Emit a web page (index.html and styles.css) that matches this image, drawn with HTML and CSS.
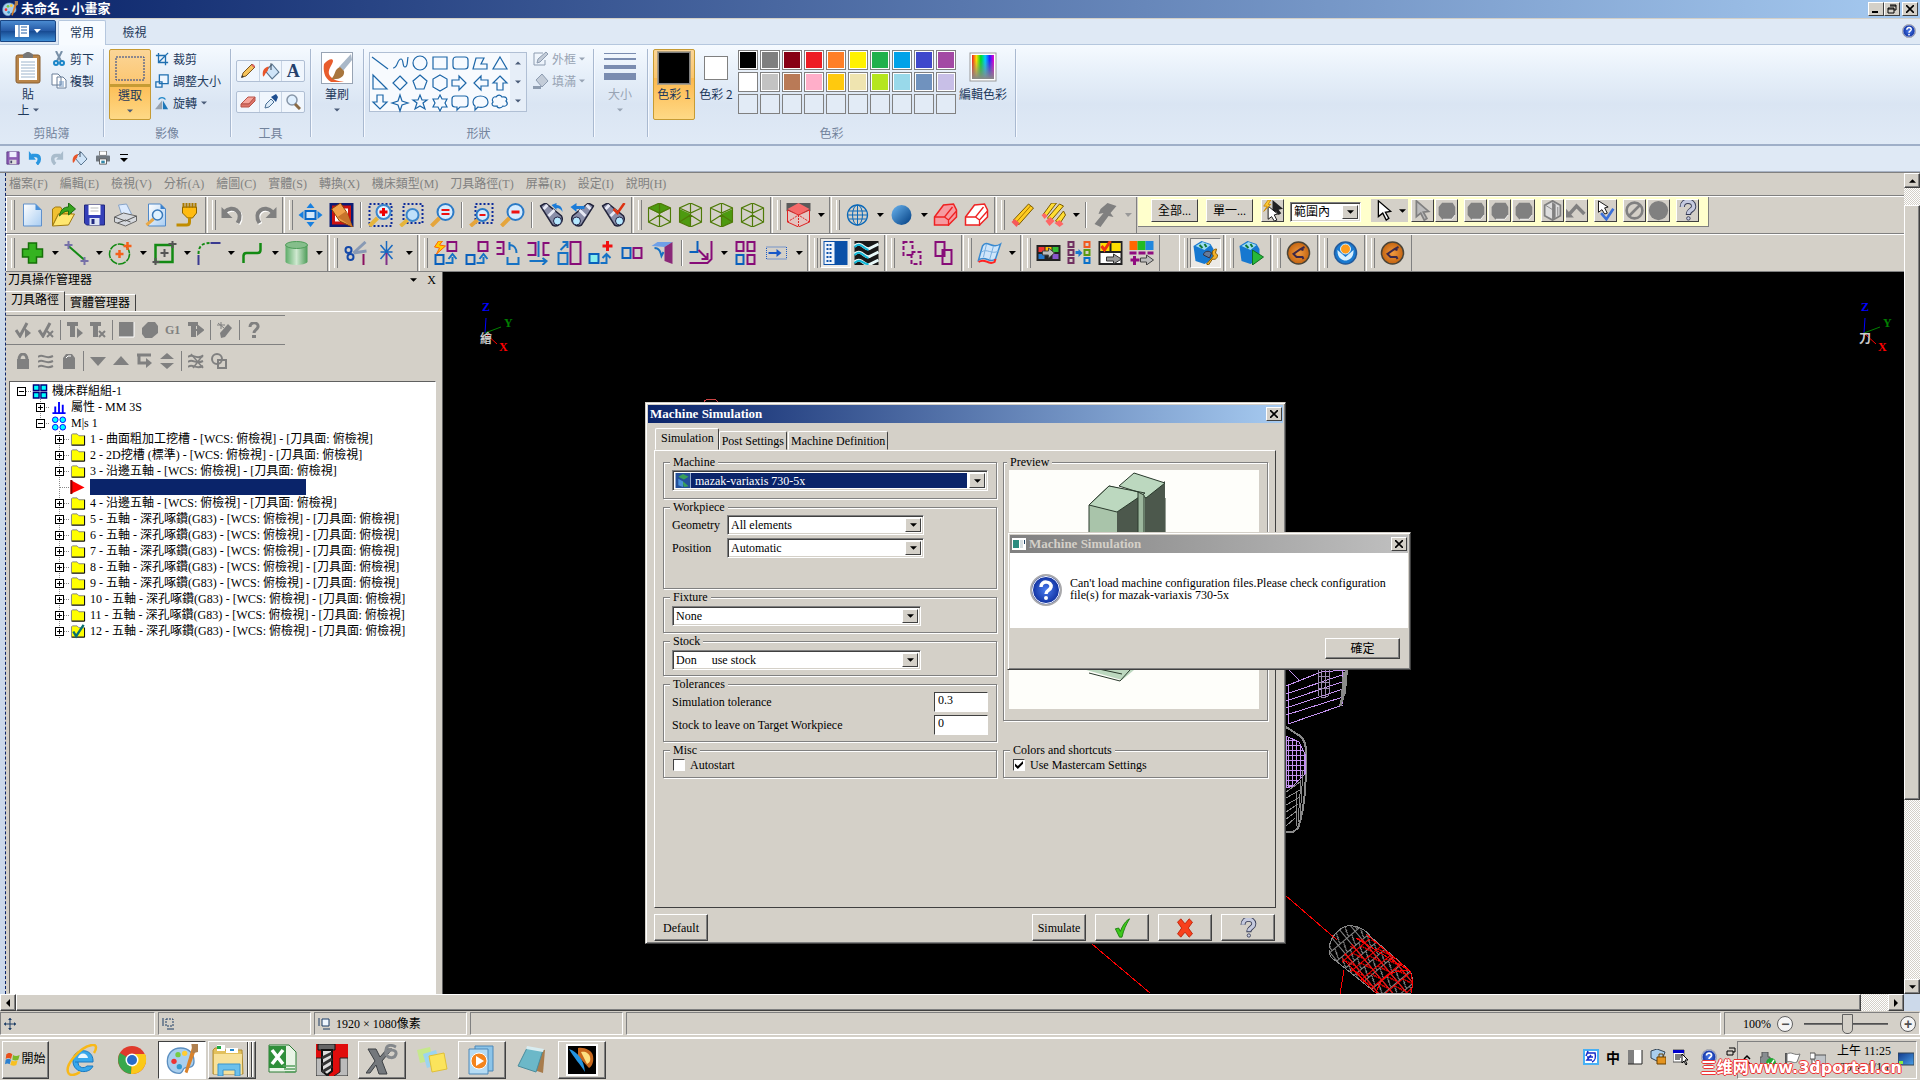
FILE: index.html
```html
<!DOCTYPE html>
<html lang="zh-Hant">
<head>
<meta charset="utf-8">
<title>未命名 - 小畫家</title>
<link rel="stylesheet" href="styles.css">
</head>
<body>
<svg class="defs" aria-hidden="true">
<defs>
<linearGradient id="gBall" x1="0" y1="0" x2="1" y2="1"><stop offset="0" stop-color="#6bb5f0"/><stop offset="1" stop-color="#003c80"/></linearGradient>
<linearGradient id="gCyl"><stop offset="0" stop-color="#5cac68"/><stop offset=".5" stop-color="#cfe8d0"/><stop offset="1" stop-color="#4d9c58"/></linearGradient>
<linearGradient id="gPage" x1="0" y1="0" x2="1" y2="1"><stop offset="0" stop-color="#fff"/><stop offset="1" stop-color="#a9cdf2"/></linearGradient>
<linearGradient id="gRain"><stop offset="0" stop-color="#e22"/><stop offset=".2" stop-color="#fd0"/><stop offset=".4" stop-color="#0d2"/><stop offset=".6" stop-color="#0cf"/><stop offset=".8" stop-color="#22f"/><stop offset="1" stop-color="#e0c"/></linearGradient>
<linearGradient id="gDark" x1="0" y1="0" x2="0" y2="1"><stop offset=".2" stop-color="#888" stop-opacity="0"/><stop offset="1" stop-color="#888"/></linearGradient>
<linearGradient id="gDesk" x1="0" y1="0" x2="1" y2="1"><stop offset="0" stop-color="#123a8c"/><stop offset="1" stop-color="#4aa0e8"/></linearGradient>
<radialGradient id="gHelp"><stop offset="0" stop-color="#4a7cf0"/><stop offset="1" stop-color="#0a2a98"/></radialGradient>
<radialGradient id="gOr"><stop offset="0" stop-color="#f09a40"/><stop offset="1" stop-color="#c46410"/></radialGradient>
</defs>
<symbol id="palette" viewBox="0 0 24 24"><path d="M11 3C5 3 1 7 1 13s4 9 9 9c3 0 2-3 4-4s7 1 7-5S17 3 11 3z" fill="#a9cfee" stroke="#5b8ec0"/><circle cx="6" cy="13" r="2" fill="#e33"/><circle cx="9" cy="8" r="2" fill="#7c4"/><circle cx="14" cy="7" r="2" fill="#fc3"/><circle cx="10" cy="17" r="2" fill="#39c"/><path d="M20 1l3 2-7 19-2-1z" fill="#d9822b"/><path d="M19 0h5v6l-4 1z" fill="#b0804e"/></symbol>
<symbol id="paste" viewBox="0 0 26 32"><rect x="1" y="3" width="24" height="28" rx="2" fill="#b98549" stroke="#8a5f30"/><rect x="4" y="6" width="18" height="22" fill="#fff"/><path d="M6 10h14M6 13h14M6 16h14M6 19h14M6 22h14M6 25h14" stroke="#9db4cc"/><path d="M8 3c0-1 3-3 5-3s5 2 5 3v3H8z" fill="#777"/></symbol>
<symbol id="cut" viewBox="0 0 16 16"><path d="M5 0l5 10M11 0L6 10" stroke="#7890a8" stroke-width="2" fill="none"/><circle cx="5" cy="12" r="2" fill="none" stroke="#1b86c8" stroke-width="2"/><circle cx="11" cy="12" r="2" fill="none" stroke="#1b86c8" stroke-width="2"/></symbol>
<symbol id="copy" viewBox="0 0 16 16"><path d="M1 1h6l3 3v8H1zM6 4h6l3 3v8H6z" fill="#fff" stroke="#6a7f98"/><path d="M8 9h5M8 11h5M8 13h5" stroke="#6d93c0"/></symbol>
<symbol id="crop" viewBox="0 0 16 16"><path d="M4 1v11h11M1 4h11v11M4 12L15 1" fill="none" stroke="#1f6fb0" stroke-width="1.5"/></symbol>
<symbol id="resize" viewBox="0 0 16 16"><path d="M5 1h10v10H5zM1 9h7v6H1z" fill="#eef6ff" stroke="#1f6fb0" stroke-width="1.5"/></symbol>
<symbol id="rotate" viewBox="0 0 16 16"><path d="M8 5v10H0z" fill="#98a2ae"/><path d="M9 5v10h6z" fill="#1d76b8"/><path d="M4 4c2-3 6-3 8 0" fill="none" stroke="#1d86c8" stroke-width="1.5"/></symbol>
<symbol id="pencil" viewBox="0 0 16 16"><path d="M2 14l1-4L12 1l3 3-9 9z" fill="#f6c45c" stroke="#7a5520"/><path d="M11 2l3 3 1-2-2-2z" fill="#d66"/><path d="M1 15l1-3 2 2z" fill="#333"/></symbol>
<symbol id="bucket" viewBox="0 0 16 16"><path d="M3 8l6-6 6 7-6 6z" fill="#cfe4f8" stroke="#5a7690"/><path d="M8 1v6" stroke="#456"/><path d="M6 4C1 5 0 9 1 13c2-1 2-4 4-5z" fill="#e8552a"/></symbol>
<symbol id="eraser" viewBox="0 0 16 16"><path d="M1 10l7-7h7l-6 7z" fill="#f6a59b" stroke="#b8544a"/><path d="M1 10h8l6-7v4l-6 6H1z" fill="#dd7468" stroke="#b8544a"/></symbol>
<symbol id="dropper" viewBox="0 0 16 16"><path d="M2 14l1-4 5-5 3 3-5 5z" fill="#dcebf8" stroke="#4a6f94"/><path d="M8 3l5 5 2-5-2-3z" fill="#1d4e90"/></symbol>
<symbol id="mag" viewBox="0 0 16 16"><circle cx="7" cy="6" r="5" fill="#e0f0ff" stroke="#8796a8" stroke-width="1.5"/><path d="M10 10l5 5" stroke="#8a6a45" stroke-width="3"/></symbol>
<symbol id="brush" viewBox="0 0 32 32"><rect x=".5" y=".5" width="31" height="31" fill="#fff" stroke="#98a4b4"/><path d="M3 12c4-5 9-6 9-3s-7 10-3 15c3 4 8 5 14 6H10C3 26 2 18 3 12z" fill="#e85c2c"/><path d="M30 2L18 15l4 4L31 8z" fill="#a9b8c8"/><path d="M19 15c-6 2-4 8-9 12 8 1 14-2 13-8z" fill="#a8763e"/></symbol>
<symbol id="outline" viewBox="0 0 16 16"><path d="M1 2h9M1 2v12h11V9" fill="none" stroke="#8d9cb0"/><path d="M4 12l1-4 8-7 2 2-8 8z" fill="#c3ccd8" stroke="#8d9cb0"/></symbol>
<symbol id="fillg" viewBox="0 0 16 16"><path d="M3 7l6-6 6 7-6 6z" fill="#c3ccd8" stroke="#8d9cb0"/><path d="M0 13h8v3H0z" fill="#8d9cb0"/></symbol>
<symbol id="rainbow" viewBox="0 0 28 32"><rect x="1" y="1" width="26" height="28" fill="#fff" stroke="#999"/><rect x="3" y="3" width="22" height="24" fill="url(#gRain)"/><rect x="3" y="3" width="22" height="24" fill="url(#gDark)"/></symbol>
<symbol id="floppy" viewBox="0 0 24 24"><path d="M2 2h20v20H4l-2-2z" fill="#3540b8" stroke="#22287c"/><path d="M6 2h12v10H6z" fill="#fff"/><path d="M8 5h8M8 8h8" stroke="#bbb"/><path d="M7 15h10v7H7z" fill="#dde4f4"/><path d="M9 16h3v5H9z" fill="#222a80"/></symbol>
<symbol id="qsave" viewBox="0 0 16 16"><path d="M1 1h14v14H1z" fill="#8c5cb4" stroke="#5c3c84"/><path d="M4 1h8v6H4z" fill="#eef"/><path d="M4 10h8v5H4z" fill="#ddd"/><path d="M5 11h2v3H5z" fill="#446"/></symbol>
<symbol id="qundo" viewBox="0 0 16 16"><path d="M4 5h5c5 0 5 7 1 10" fill="none" stroke="#2a96e0" stroke-width="4"/><path d="M1 0v10h8z" fill="#2a96e0"/></symbol>
<symbol id="qredo" viewBox="0 0 16 16"><path d="M12 5H7c-5 0-5 7-1 10" fill="none" stroke="#a9bccc" stroke-width="4"/><path d="M15 0v10H7z" fill="#a9bccc"/></symbol>
<symbol id="qprint" viewBox="0 0 16 16"><path d="M4 0h8v5H4z" fill="#fff" stroke="#777"/><rect x="0" y="5" width="16" height="7" rx="1" fill="#707880"/><path d="M4 9h8v6H4z" fill="#fff" stroke="#555"/><path d="M6 11h4v3H6z" fill="#38a"/></symbol>
<symbol id="new" viewBox="0 0 24 24"><path d="M3 1h12l6 6v16H3z" fill="url(#gPage)" stroke="#5f90cc"/><path d="M15 1v6h6z" fill="#4a90d8"/></symbol>
<symbol id="open" viewBox="0 0 24 24"><path d="M1 23V6l3-2h5l2 3h9v4H7z" fill="#f0c030" stroke="#a07a10"/><path d="M1 23L7 11h16l-6 11z" fill="#ffe770" stroke="#a07a10"/><path d="M8 13c1-7 5-9 9-9V0l7 6-7 6V8c-4 0-6 2-9 5z" fill="#37a41e" stroke="#1c6c10"/></symbol>
<symbol id="print" viewBox="0 0 24 24"><path d="M5 2l8-1 5 10-9 3z" fill="#dbeaff" stroke="#88a4c8"/><path d="M1 14l9-4 13 3v5l-11 5L1 19z" fill="#d6d9de" stroke="#666"/><path d="M1 14l11 4 11-5M4 20l8-3 5 2" fill="none" stroke="#555"/></symbol>
<symbol id="preview" viewBox="0 0 24 24"><path d="M4 1h12l5 5v17H4z" fill="url(#gPage)" stroke="#4f88c8"/><path d="M16 1v5h5z" fill="#3a80cc"/><circle cx="13" cy="12" r="5" fill="#dff1ff" stroke="#3a78b8" stroke-width="1.5"/><path d="M9 16l-7 6" stroke="#e8a848" stroke-width="3"/></symbol>
<symbol id="plug" viewBox="0 0 24 24"><path d="M7 4h14v6l-4 5h-5L7 10z" fill="#fb1" stroke="#8a6400"/><path d="M8 0v5M11 0v5M14 0v5M17 0v5M20 0v5" stroke="#a87800" stroke-width="2"/><path d="M14 14v5q0 3-3 3H1" fill="none" stroke="#c08c00" stroke-width="3"/></symbol>
<symbol id="undo" viewBox="0 0 24 24"><path d="M4 10c8-8 20 0 13 11" fill="none" stroke="#fff" stroke-width="4"/><path d="M3 9c8-8 20 0 13 11" fill="none" stroke="#808080" stroke-width="4"/><path d="M0 4v11h11z" fill="#808080"/></symbol>
<symbol id="redo" viewBox="0 0 24 24"><path d="M21 10C13 2 1 10 8 21" fill="none" stroke="#fff" stroke-width="4"/><path d="M20 9C12 1 0 9 7 20" fill="none" stroke="#808080" stroke-width="4"/><path d="M24 4v11H13z" fill="#808080"/></symbol>
<symbol id="fit" viewBox="0 0 24 24"><path d="M7 8h10v8H7z" fill="#d4e8fa" stroke="#0868c8" stroke-width="2"/><path d="M12 0l4 5H8zM12 24l4-5H8zM0 12l5-4v8zM24 12l-5-4v8z" fill="#1880e0"/></symbol>
<symbol id="repaint" viewBox="0 0 24 24"><path d="M0 0h24v24H0z" fill="#0c1c74"/><path d="M4 4h16v16H4z" fill="#fff" stroke="#c11" stroke-width="3"/><path d="M2 6l9-6 6 9 6 15-13-6z" fill="#f0a04a" stroke="#8a4208"/><path d="M8 14l9-6 6 16z" fill="#c8742c"/></symbol>
<symbol id="zwin" viewBox="0 0 24 24"><path d="M1 1h22v22H1z" fill="none" stroke="#0b2a9a" stroke-width="2" stroke-dasharray="2 2"/><circle cx="15" cy="9" r="7" fill="#e2f2ff" stroke="#3b86cc" stroke-width="2"/><path d="M9 15l-8 8" stroke="#e5b53c" stroke-width="4"/><path d="M11 9h8M15 5v8" stroke="#e00" stroke-width="3"/></symbol>
<symbol id="ztgt" viewBox="0 0 24 24"><path d="M4 1h19v19H4z" fill="none" stroke="#0b2a9a" stroke-width="2" stroke-dasharray="2 2"/><circle cx="13" cy="12" r="6" fill="#bfe0fa" stroke="#3b86cc" stroke-width="2"/><path d="M8 17l-7 6" stroke="#e5b53c" stroke-width="4"/></symbol>
<symbol id="zeq" viewBox="0 0 24 24"><circle cx="15" cy="9" r="8" fill="#d6ecff" stroke="#2b7ac6" stroke-width="2"/><path d="M9 15l-8 8" stroke="#e5a53c" stroke-width="4"/><path d="M11 7h8M11 11h8" stroke="#e11" stroke-width="2"/></symbol>
<symbol id="zm2" viewBox="0 0 24 24"><path d="M6 1h17v19H6z" fill="none" stroke="#0b2a9a" stroke-width="2" stroke-dasharray="2 2"/><circle cx="13" cy="12" r="6" fill="#d6ecff" stroke="#2b7ac6" stroke-width="2"/><path d="M8 17l-7 6" stroke="#e5a53c" stroke-width="4"/><path d="M10 12h6" stroke="#e11" stroke-width="2"/></symbol>
<symbol id="zm" viewBox="0 0 24 24"><circle cx="15" cy="9" r="8" fill="#d6ecff" stroke="#2b7ac6" stroke-width="2"/><path d="M9 15l-8 8" stroke="#e5a53c" stroke-width="4"/><path d="M11 9h8" stroke="#e11" stroke-width="3"/></symbol>
<symbol id="bino" viewBox="0 0 24 24"><path d="M1 3l5-3 16 13c3 6-4 12-9 9z" fill="#8a8ea8" stroke="#22243c" stroke-width="1.5"/><path d="M4 6l4-4M9 13l6-6" stroke="#e6e8f4" stroke-width="3"/><circle cx="18" cy="18" r="4" fill="#b6e8ff" stroke="#224"/></symbol>
<symbol id="bino1" viewBox="0 0 24 24"><use href="#bino"/><path d="M12 2l5-2v2c5 0 6 4 6 7-2-3-3-4-6-4v2z" fill="#1c7cd8"/></symbol>
<symbol id="bino2" viewBox="0 0 24 24"><g transform="translate(24 0) scale(-1 1)"><use href="#bino"/></g><path d="M0 4l6-4v3h8v3H6v3z" fill="#1c7cd8"/></symbol>
<symbol id="bino3" viewBox="0 0 24 24"><use href="#bino"/><path d="M12 6l4 4 7-10" fill="none" stroke="#d31" stroke-width="2.5"/></symbol>
<symbol id="cube" viewBox="0 0 24 24"><path d="M12 0l11 5v14l-11 5-11-5V5zM12 10v14M1 5l11 5 11-5M12 0v10M1 19l11-7 11 7" fill="none" stroke="#4e7a08" stroke-width="1.2"/></symbol>
<symbol id="cubeT" viewBox="0 0 24 24"><path d="M12 0l11 5-11 6L1 5z" fill="#4d9a10"/><use href="#cube"/></symbol>
<symbol id="cubeL" viewBox="0 0 24 24"><path d="M1 6l11 5v13L1 19z" fill="#4d9a10"/><use href="#cube"/></symbol>
<symbol id="cubeR" viewBox="0 0 24 24"><path d="M23 6l-11 5v13l11-5z" fill="#4d9a10"/><use href="#cube"/></symbol>
<symbol id="cubeRed" viewBox="0 0 24 24"><path d="M0 0h24v8l-3 2H3L0 8z" fill="#5a5a5a"/><path d="M12 0l11 6-11 6L1 6z" fill="#f66a6a"/><path d="M1 7l11 5 11-5v12l-11 5-11-5z" fill="#e4c4c0" stroke="#d22"/><path d="M12 12v12M1 19l11-7 11 7" stroke="#d22" fill="none" stroke-dasharray="2 1"/></symbol>
<symbol id="globe" viewBox="0 0 24 24"><circle cx="12" cy="12" r="10" fill="none" stroke="#0a68b8" stroke-width="1.3"/><path d="M2 12h20M3 8h18M3 16h18M12 2v20" stroke="#0a68b8" fill="none"/><ellipse cx="12" cy="12" rx="5" ry="10" fill="none" stroke="#0a68b8"/></symbol>
<symbol id="ball" viewBox="0 0 24 24"><circle cx="12" cy="12" r="10" fill="url(#gBall)"/></symbol>
<symbol id="block" viewBox="0 0 24 24"><path d="M1 14l9-12 10-1 3 6v7l-8 8H1z" fill="#f69aa0" stroke="#e22" stroke-width="1.5"/><path d="M1 14h10l4 3v6M11 14l8-10M15 17l8-9" stroke="#e22" fill="none" stroke-width="1.3"/></symbol>
<symbol id="blockW" viewBox="0 0 24 24"><path d="M1 14l9-12 10-1 3 6v7l-8 8H1z" fill="#fff" stroke="#e22" stroke-width="1.5"/><path d="M1 14h10l4 3v6M11 14l8-10M15 17l8-9" stroke="#e22" fill="none" stroke-width="1.3"/></symbol>
<symbol id="pen" viewBox="0 0 24 24"><path d="M3 17L18 1l5 4L8 22z" fill="#fc2" stroke="#7a5a00"/><path d="M6 19L20 3" stroke="#a87800"/><path d="M1 19l3-3 5 4-3 4z" fill="#f55a5a"/></symbol>
<symbol id="pens" viewBox="0 0 24 24"><path d="M2 11L10 0h5L5 13zM6 15L18 1l4 2L9 18zM14 18l8-10 2 4-6 9z" fill="#fd3" stroke="#7a5a00"/><path d="M0 12l3-2 3 3-3 3zM4 18l5-4 4 4-5 5zM13 20l5-3 4 4-4 3z" fill="#f66"/></symbol>
<symbol id="tool" viewBox="0 0 24 24"><path d="M14 0l9 3-6 7 3 4-5-1-8 11-6-3 9-11-5 1 2-5z" fill="#808080"/></symbol>
<symbol id="plus" viewBox="0 0 24 24"><path d="M8 2h8v6h6v8h-6v6H8v-6H2V8h6z" fill="#35b320" stroke="#167008" stroke-width="1.5"/></symbol>
<symbol id="line" viewBox="0 0 24 24"><path d="M4 5l16 14" stroke="#138a13" stroke-width="2"/><path d="M0 4h8M4 0v8M16 20h8M20 16v8" stroke="#7670a8" stroke-width="2"/></symbol>
<symbol id="circ" viewBox="0 0 24 24"><circle cx="11" cy="13" r="10" fill="none" stroke="#138a13" stroke-width="1.5" stroke-dasharray="8 1"/><path d="M7 13h8M11 9v8M15 5h8M19 1v8" stroke="#f4611a" stroke-width="2.5"/></symbol>
<symbol id="rect" viewBox="0 0 24 24"><path d="M3 4h17v17H3z" fill="none" stroke="#138a13" stroke-width="2.5"/><path d="M8 12h8M12 8v8M16 3h8M20 0v7M0 21h7M3 17v7" stroke="#555" stroke-width="2"/></symbol>
<symbol id="fillet" viewBox="0 0 24 24"><path d="M2 13C2 5 6 2 13 2" fill="none" stroke="#138a13" stroke-width="2" stroke-dasharray="3 2"/><path d="M14 2h10M2 14v10" stroke="#3a3a90" stroke-width="2"/></symbol>
<symbol id="spline" viewBox="0 0 24 24"><path d="M3 22v-7q0-3 3-3h11q3 0 3-3V2" fill="none" stroke="#138a13" stroke-width="2.5"/></symbol>
<symbol id="cyl" viewBox="0 0 24 24"><path d="M1 4v17c3 4 19 4 22 0V4z" fill="url(#gCyl)"/><ellipse cx="12" cy="4" rx="11" ry="3.500" fill="#85be8b" stroke="#4d9c58"/></symbol>
<symbol id="trim" viewBox="0 0 24 24"><path d="M10 12L22 1M10 12l13-2" stroke="#8899b4" stroke-width="3"/><circle cx="5" cy="9" r="3" fill="none" stroke="#1448a8" stroke-width="2"/><circle cx="7" cy="16" r="3" fill="none" stroke="#1448a8" stroke-width="2"/><path d="M20 13v11" stroke="#8a1060" stroke-width="2"/></symbol>
<symbol id="brk" viewBox="0 0 24 24"><path d="M12 0v10M6 4l12 14M18 4L6 18M6 11h12" stroke="#1868c0" stroke-width="1.500"/><path d="M12 12v12" stroke="#803088" stroke-width="2"/></symbol>
<symbol id="x1" viewBox="0 0 24 24"><path d="M14 1h9v9h-9z" fill="none" stroke="#870c78" stroke-width="2"/><path d="M2 14h8v9H2z" fill="none" stroke="#0a60bc" stroke-width="2"/><path d="M12 22h7v-6M15 18l4-5 4 5" fill="none" stroke="#1672c4" stroke-width="2"/></symbol>
<symbol id="x0" viewBox="0 0 24 24"><use href="#x1"/><path d="M5 0L1 6l5 1-3 6 9-8-6-1 3-4z" fill="#fc0" stroke="#f60"/></symbol>
<symbol id="x2" viewBox="0 0 24 24"><path d="M1 1h7v12H1M1 7h5" fill="none" stroke="#870c78" stroke-width="2"/><path d="M12 16v7h11v-7M14 4c5 0 7 4 7 8M14 1v8" fill="none" stroke="#1672c4" stroke-width="2"/></symbol>
<symbol id="x3" viewBox="0 0 24 24"><path d="M1 2h8v12H1M23 2h-6v12h6" fill="none" stroke="#870c78" stroke-width="2"/><path d="M12 0v16M3 20h16M16 17l4 3-4 4" fill="none" stroke="#1672c4" stroke-width="2"/></symbol>
<symbol id="x4" viewBox="0 0 24 24"><path d="M13 1h10v22H13z" fill="none" stroke="#870c78" stroke-width="2"/><path d="M1 12h9v11H1zM3 9l7-7M5 1h5v6" fill="none" stroke="#1672c4" stroke-width="2"/></symbol>
<symbol id="x5" viewBox="0 0 24 24"><path d="M1 13h9v9H1z" fill="#8ee" stroke="#0a60bc" stroke-width="2"/><path d="M12 22h6v-8M14 17l4-4 4 4" fill="none" stroke="#1672c4" stroke-width="2"/><path d="M14 5h10M19 0v10" stroke="#f01010" stroke-width="3"/></symbol>
<symbol id="x6" viewBox="0 0 24 24"><path d="M3 7h8v10H3z" fill="none" stroke="#0a60bc" stroke-width="2"/><path d="M14 7h8v10h-8z" fill="none" stroke="#870c78" stroke-width="2"/></symbol>
<symbol id="x7" viewBox="0 0 24 24"><path d="M1 5l6-4h15l-8 5z" fill="#6fa0e8"/><path d="M22 1v22l-8-3V6z" fill="#8a2878"/><path d="M4 7c5 0 6 4 7 8l2-4" fill="none" stroke="#1672c4" stroke-width="2"/></symbol>
<symbol id="x8" viewBox="0 0 24 24"><path d="M8 0v11H0" fill="none" stroke="#0a60bc" stroke-width="2"/><path d="M22 0v18l-4 4H0M9 9l9 9m0-6v6h-6" fill="none" stroke="#870c78" stroke-width="2"/></symbol>
<symbol id="x9" viewBox="0 0 24 24"><path d="M3 1h7v9H3zM14 1h7v9h-7zM14 14h7v9h-7z" fill="none" stroke="#870c78" stroke-width="2"/><path d="M3 14h7v9H3z" fill="none" stroke="#0a60bc" stroke-width="2"/></symbol>
<symbol id="x10" viewBox="0 0 24 24"><path d="M2 6h20v12H2z" fill="none" stroke="#1858c8" stroke-dasharray="1 1"/><path d="M4 12h10" stroke="#1858c8" stroke-width="2"/><path d="M12 8l5 4-5 4z" fill="#1858c8"/></symbol>
<symbol id="panel" viewBox="0 0 24 24"><path d="M0 0h24v24H0z" fill="#0a50a8"/><path d="M1 1h10v22H1z" fill="#eef4fc"/><path d="M3 4h6M3 8h6M3 12h6M3 16h6M3 20h6" stroke="#0a50a8" stroke-width="2" stroke-dasharray="2 1"/></symbol>
<symbol id="waves" viewBox="0 0 24 24"><path d="M0 0h24v24H0z" fill="#181818"/><path d="M0 5c8-6 10 6 16 2l8-4M0 13c8-6 10 6 16 2l8-4M0 21c8-6 10 6 16 2l8-4" fill="none" stroke="#e8f8f8" stroke-width="3"/><path d="M0 6c6-6 9 2 14 3M0 14c6-6 9 2 14 3M0 22c6-6 9 2 14 1" fill="none" stroke="#10b8d8" stroke-width="2"/></symbol>
<symbol id="dup1" viewBox="0 0 24 24"><path d="M3 1h9v13H3zM11 11h9v12h-9z" fill="none" stroke="#870c78" stroke-width="2" stroke-dasharray="4 2"/></symbol>
<symbol id="dup2" viewBox="0 0 24 24"><path d="M4 1h9v14H4zM11 9h9v14h-9z" fill="none" stroke="#870c78" stroke-width="2"/></symbol>
<symbol id="surf" viewBox="0 0 24 24"><path d="M5 5c5-7 9 4 18-2l-5 15c-7 5-9-4-17 1z" fill="#cfe5fa" stroke="#3a8ad0" stroke-width="1.500"/><path d="M9 3L6 16M16 5l-4 14M4 11c6-4 10 3 17-1" stroke="#7ab0e0" fill="none"/><path d="M1 21c7-5 9 4 16 0l1-3" fill="none" stroke="#f22" stroke-width="2"/></symbol>
<symbol id="lv1" viewBox="0 0 24 24"><path d="M0 4h24v16H0z" fill="#222"/><path d="M2 6h6v5H2z" fill="#e33"/><path d="M9 6h6v5H9z" fill="#fb0"/><path d="M16 6h6v5h-6z" fill="#3b3"/><path d="M2 13h6v5H2z" fill="#27c"/><path d="M16 13h6v5h-6z" fill="#85c"/><path d="M6 10h6V7l6 5-6 5v-3H6z" fill="#bbb" stroke="#444"/></symbol>
<symbol id="lv2" viewBox="0 0 24 24"><path d="M1 1h5v5H1zM1 9h5v5H1zM1 17h5v5H1z" fill="none" stroke="#703060" stroke-width="2"/><path d="M17 1h5v5h-5z" fill="none" stroke="#f05a20" stroke-width="2"/><path d="M17 9h5v5h-5z" fill="none" stroke="#5a9a10" stroke-width="2"/><path d="M17 17h5v5h-5z" fill="none" stroke="#0a70c8" stroke-width="2"/><path d="M8 10h3V8l4 4-4 4v-3H8z" fill="#1878d0"/></symbol>
<symbol id="lv3" viewBox="0 0 24 24"><path d="M1 1h22v22H1z" fill="#fff" stroke="#222" stroke-width="2"/><path d="M2 2h20v9H2z" fill="#fd0"/><path d="M1 11h22M12 1v10" stroke="#222" stroke-width="2"/><path d="M3 5l3 4 6-9" fill="none" stroke="#e31" stroke-width="3"/><path d="M8 16h7v-3l8 5-8 5v-3H8z" fill="#999" stroke="#333"/></symbol>
<symbol id="lv4" viewBox="0 0 24 24"><path d="M0 0h8v9H0z" fill="#f60"/><path d="M8 0h8v9H8z" fill="#2b2"/><path d="M16 0h8v9h-8z" fill="#28d"/><path d="M0 12h7M9 12h7M18 12h6M1 19h9M5 15v9" stroke="#900c80" stroke-width="3"/><path d="M11 17h6v-3l7 5-7 5v-3h-6z" fill="#bbb" stroke="#444"/></symbol>
<symbol id="sim1" viewBox="0 0 24 24"><path d="M0 5l8-5 9 3 3 5v10l-9 5-9-3z" fill="#1678d0"/><path d="M2 5l7-4 8 3-6 5z" fill="#9cdcf4"/><path d="M6 4l3 3M11 3l2 3" stroke="#173" stroke-width="2"/><path d="M10 14c0-4 6-5 8-2l-2 5z" fill="#667a98" stroke="#334"/><path d="M13 23l7-8c-3-4 0-7 3-7l-1 4 2 2c0 4-3 5-5 4l-4 6z" fill="#f4b22a" stroke="#8a5c00"/></symbol>
<symbol id="sim2" viewBox="0 0 24 24"><path d="M0 5l8-5 9 3 3 5v10l-9 5-9-3z" fill="#1678d0"/><path d="M2 5l7-4 8 3-6 5z" fill="#9cdcf4"/><path d="M6 4l3 3M11 3l2 3" stroke="#173" stroke-width="2"/><path d="M13 9l11 7-11 8z" fill="#27b83a" stroke="#117022"/></symbol>
<symbol id="orange" viewBox="0 0 24 24"><circle cx="12" cy="12" r="11" fill="url(#gOr)" stroke="#4a4438" stroke-width="1.500"/><path d="M18 6l-4 2-7 5 3 3h6l1 2M14 8l3 1" fill="none" stroke="#3d2848" stroke-width="2"/></symbol>
<symbol id="blue" viewBox="0 0 24 24"><circle cx="12" cy="12" r="11" fill="#1a7ad0" stroke="#245a9a" stroke-width="1.500"/><path d="M4 9c-1 14 17 14 16 0l-8 7z" fill="#d8f0ff"/><circle cx="12" cy="8" r="5" fill="#ff9c1c" stroke="#d8f0ff"/></symbol>
<symbol id="cursor" viewBox="0 0 24 24"><path d="M5 1v18l5-4 4 8 3-2-4-7 6-1z" fill="#fff" stroke="#000" stroke-width="1.500"/></symbol>
<symbol id="cursorG" viewBox="0 0 24 24"><path d="M5 1v18l5-4 4 8 3-2-4-7 6-1z" fill="#bbb" stroke="#808080" stroke-width="2"/></symbol>
<symbol id="curFlash" viewBox="0 0 24 24"><path d="M12 0v16l4-3 3 4 3-2-3-4 5-1z" fill="#222"/><path d="M7 7v15l4-3 3 5 3-1-3-6 4-1z" fill="#fff" stroke="#000"/><path d="M7 0L2 7h4l-4 6 8-8H7l3-5z" fill="#fc3" stroke="#c80"/></symbol>
<symbol id="blob" viewBox="0 0 24 24"><path d="M7 3h12l3 5v9l-4 5H7l-4-5V8z" fill="#808080"/><path d="M8 22h10l4-5" fill="none" stroke="#fff"/></symbol>
<symbol id="hatchCube" viewBox="0 0 24 24"><path d="M12 1l9 5v12l-9 5-9-5V6z" fill="#ddd" stroke="#808080" stroke-width="2"/><path d="M12 3v19l3-2V5zM4 6l8 5M18 8v10" fill="#808080" stroke="#808080"/></symbol>
<symbol id="bend" viewBox="0 0 24 24"><path d="M3 17L12 7l9 9" fill="none" stroke="#808080" stroke-width="4"/><path d="M0 10v10h9z" fill="#808080"/></symbol>
<symbol id="curCheck" viewBox="0 0 24 24"><path d="M4 1v13l4-3 3 5 3-1-3-6 4-1z" fill="#fff" stroke="#000"/><path d="M7 15l6 7 8-12" fill="none" stroke="#3a70d8" stroke-width="3"/></symbol>
<symbol id="no" viewBox="0 0 24 24"><circle cx="12" cy="12" r="9" fill="none" stroke="#808080" stroke-width="3"/><path d="M6 18L18 6" stroke="#808080" stroke-width="3"/></symbol>
<symbol id="disc" viewBox="0 0 24 24"><circle cx="12" cy="12" r="11" fill="#808080"/></symbol>
<symbol id="qm" viewBox="0 0 24 24"><path d="M6 8c0-9 13-8 13-1 0 5-6 4-6 10" fill="none" stroke="#333852" stroke-width="6"/><path d="M6 8c0-9 13-8 13-1 0 5-6 4-6 9" fill="none" stroke="#c4c9de" stroke-width="4"/><circle cx="13" cy="21" r="2" fill="#c8cce0" stroke="#333852"/></symbol>
<symbol id="p1" viewBox="0 0 16 16"><path d="M1 8l4 6L12 1" fill="none" stroke="#808080" stroke-width="3"/><path d="M10 6l6 5-6 5z" fill="#808080"/></symbol>
<symbol id="p2" viewBox="0 0 16 16"><path d="M1 8l4 6L12 1" fill="none" stroke="#808080" stroke-width="3"/><path d="M9 9l6 6M15 9l-6 6" stroke="#808080" stroke-width="2"/></symbol>
<symbol id="p3" viewBox="0 0 16 16"><path d="M0 0h11v4H8v11H3V4H0z" fill="#808080"/><path d="M10 6l6 5-6 5z" fill="#808080"/></symbol>
<symbol id="p4" viewBox="0 0 16 16"><path d="M0 0h11v4H8v11H3V4H0z" fill="#808080"/><path d="M9 9l6 6M15 9l-6 6" stroke="#808080" stroke-width="2"/></symbol>
<symbol id="p5" viewBox="0 0 16 16"><path d="M0 0h15v15H0z" fill="#808080"/><path d="M15 0v15H0" stroke="#fff" fill="none"/></symbol>
<symbol id="p6" viewBox="0 0 16 16"><path d="M6 0h7l3 4v7l-6 5H3l-3-4V6z" fill="#808080"/></symbol>
<symbol id="p8" viewBox="0 0 16 16"><path d="M0 0h10v4H8v11H3V4H0z" fill="#808080"/><path d="M6 8h6M10 4l5 4-5 4z" fill="#808080" stroke="#808080" stroke-width="2"/></symbol>
<symbol id="p9" viewBox="0 0 16 16"><path d="M3 11l8-9 4 4-7 9-4 1z" fill="#808080"/><path d="M0 3h8M4 0v7M1 1l6 5" stroke="#808080"/></symbol>
<symbol id="p10" viewBox="0 0 16 16"><path d="M4 5c0-6 9-5 8 0-1 3-4 3-4 6" fill="none" stroke="#808080" stroke-width="3"/><path d="M6 13h4v3H6z" fill="#808080"/></symbol>
<symbol id="q1" viewBox="0 0 16 16"><path d="M2 6h12v10H2z" fill="#808080"/><path d="M4 7c0-8 8-8 8 0" fill="none" stroke="#808080" stroke-width="3"/></symbol>
<symbol id="q3" viewBox="0 0 16 16"><path d="M2 16V5l3-4h6l3 4v11z" fill="#808080"/><path d="M5 5l2-2h3" fill="none" stroke="#fff"/></symbol>
<symbol id="q2" viewBox="0 0 16 16"><path d="M0 4c5-4 7 3 15-1M0 9c5-4 7 3 15-1M0 14c5-4 7 3 15-1" fill="none" stroke="#808080" stroke-width="2"/></symbol>
<symbol id="q8" viewBox="0 0 16 16"><use href="#q2"/><path d="M3 1l12 14M15 2L5 15" stroke="#808080" stroke-width="1.500"/></symbol>
<symbol id="q4" viewBox="0 0 16 16"><path d="M0 4h16l-8 9z" fill="#808080"/></symbol>
<symbol id="q5" viewBox="0 0 16 16"><path d="M0 12h16L8 3z" fill="#808080"/></symbol>
<symbol id="q6" viewBox="0 0 16 16"><path d="M15 2H1M3 2v8h8" fill="none" stroke="#808080" stroke-width="3"/><path d="M10 5l6 5-6 5z" fill="#808080"/></symbol>
<symbol id="q7" viewBox="0 0 16 16"><path d="M1 6h14L8 0zM1 10h14l-7 6z" fill="#808080"/></symbol>
<symbol id="q9" viewBox="0 0 16 16"><circle cx="6" cy="6" r="5" fill="none" stroke="#808080" stroke-width="2"/><path d="M7 7h8v8H7z" fill="none" stroke="#808080" stroke-width="2"/></symbol>
<symbol id="grp" viewBox="0 0 16 16"><path d="M1 1h6v6H1zM9 1h6v6H9zM1 9h6v6H1zM9 9h6v6H9z" fill="#0ff" stroke="#00007c" stroke-width="1.500"/></symbol>
<symbol id="attr" viewBox="0 0 16 16"><path d="M1 14h14M4 14V7M8 14V2M12 14V5" stroke="#00f" stroke-width="2"/></symbol>
<symbol id="tg" viewBox="0 0 16 16"><circle cx="4" cy="4" r="3" fill="#0ff" stroke="#00f"/><circle cx="12" cy="4" r="3" fill="#0ff" stroke="#00f"/><circle cx="4" cy="12" r="3" fill="#0ff" stroke="#00f"/><circle cx="12" cy="12" r="3" fill="#0ff" stroke="#00f"/></symbol>
<symbol id="fold" viewBox="0 0 16 16"><path d="M1 13V3l1-1h5l2 2h6v10H2z" fill="#ff0" stroke="#808080"/><path d="M1 14h14V4" fill="none" stroke="#000"/></symbol>
<symbol id="foldC" viewBox="0 0 16 16"><use href="#fold"/><path d="M3 8l3 5 8-12" fill="none" stroke="#087070" stroke-width="2.500"/></symbol>
<symbol id="ins" viewBox="0 0 16 16"><path d="M0 0l15 8-15 7z" fill="#f00"/><path d="M0 0h2v15H0z" fill="#800000"/></symbol>
<symbol id="dn" viewBox="0 0 8 4"><path d="M0 0h8L4 4z"/></symbol>
<symbol id="xx" viewBox="0 0 8 8"><path d="M0 0l8 8M8 0L0 8" stroke="#000" stroke-width="1.600"/></symbol>
<symbol id="ok" viewBox="0 0 24 24"><path d="M4 13l4-1 2 4C13 8 17 3 21 1 17 8 14 14 12 23H9z" fill="#3fc81c" stroke="#137a08"/></symbol>
<symbol id="bad" viewBox="0 0 24 24"><path d="M3 5l4-4 5 6 5-6 4 4-5 7 5 7-4 4-5-6-5 6-4-4 5-7z" fill="#f8401c" stroke="#b81c04"/></symbol>
<symbol id="ie" viewBox="0 0 32 32"><path d="M9 18h18c1-16-22-14-20 0 1 12 17 12 20 4h-6c-3 3-9 2-9-4" fill="#38a8ec" stroke="#1878c0"/><path d="M12 14c1-6 9-6 10 0z" fill="#e8f6ff"/><path d="M3 30C-3 22 14 3 26 1c6-1 4 5 2 8M3 30c3 2 8 0 11-2" fill="none" stroke="#f8b818" stroke-width="2.500"/></symbol>
<symbol id="chrome" viewBox="0 0 32 32"><circle cx="16" cy="16" r="14" fill="#e03a2c"/><path d="M16 16L4 9a14 14 0 0 0 11 21z" fill="#38a84c"/><path d="M16 16h14a14 14 0 0 1-15 14z" fill="#fbc918"/><path d="M16 10h13c2 4 1 8 0 10l-9-2z" fill="#fbc918"/><circle cx="16" cy="16" r="6.500" fill="#fff"/><circle cx="16" cy="16" r="5" fill="#2a6cc8"/></symbol>
<symbol id="explorer" viewBox="0 0 32 32"><path d="M1 6l2-2h6l1 2h20l1 24H1z" fill="#e2c05c" stroke="#b08c30"/><path d="M5 1h8v6H5zM14 4h12v5H14z" fill="#fff"/><path d="M5 2h4v3H5z" fill="#2a4"/><path d="M18 5h4v2h-4z" fill="#28c"/><path d="M2 10h28v20H2z" fill="#f7e19a"/><path d="M6 32V20h22v12h-5v-6H11v6z" fill="#6cc0ec" stroke="#3a94cc"/></symbol>
<symbol id="excel" viewBox="0 0 32 32"><path d="M3 1h20l7 7v20H3z" fill="#e9f4e6" stroke="#2a7c34"/><path d="M3 2h17v22H3z" fill="#2f8f3a"/><path d="M6 6l11 14M17 6L6 20" stroke="#fff" stroke-width="3.500"/><path d="M17 22h12M18 25h11M19 28h10" stroke="#58a060" stroke-width="1.500"/></symbol>
<symbol id="mcam" viewBox="0 0 32 32"><path d="M0 0h32v32H0z" fill="#e00c0c"/><path d="M0 14h8v12l5 6H0zM24 14h8v18H18l6-4z" fill="#bbb" stroke="#222"/><path d="M2 0h17v6H2z" fill="#666" stroke="#111"/><path d="M6 6h10v21l-5 4-5-4z" fill="#ddd" stroke="#111" stroke-width="2"/><path d="M6 14l10-5M6 21l10-6M6 28l10-6" stroke="#333" stroke-width="3"/></symbol>
<symbol id="x6i" viewBox="0 0 32 32"><path d="M2 5h8l4 8 7-8h5L16 17l5 13h-8l-3-9-6 8H0l9-12z" fill="#74787c" stroke="#3c4044"/><path d="M30 3c-8-4-11 0-10 6s9 6 10 1-8-5-9-1" fill="none" stroke="#84888c" stroke-width="3"/></symbol>
<symbol id="notes" viewBox="0 0 32 32"><path d="M1 6l13-3 3 13-13 3z" fill="#c6e88c"/><path d="M7 10l13-4 4 14-13 4z" fill="#9cd4f0"/><path d="M13 12l15-3 3 16-15 3z" fill="#fbe45c" stroke="#e0c038"/></symbol>
<symbol id="media" viewBox="0 0 32 32"><path d="M9 2h18v25H9z" fill="#8cc4e8" stroke="#4c88b8"/><path d="M3 5h19v25H3z" fill="#b6dcf4" stroke="#4c88b8"/><circle cx="13" cy="17" r="8" fill="#f4841c" stroke="#fff"/><path d="M10 12v10l8-5z" fill="#fff"/></symbol>
<symbol id="npad" viewBox="0 0 32 32"><path d="M12 3l17 3-2 23-6-2z" fill="#a87c4c"/><path d="M11 4l16 2-7 22L2 22z" fill="#6cb8c8" stroke="#4a8c9c"/><path d="M11 2l17 3-1 3-17-3z" fill="#d8ecf0"/></symbol>
<symbol id="space" viewBox="0 0 32 32"><path d="M0 0h32v32H0z" fill="#fff"/><path d="M2 2h28v28H2z" fill="#000"/><path d="M12 4c6-1 14 2 15 8s-1 10-4 12L12 12z" fill="#c8681c"/><path d="M15 8c4-1 8 1 9 5s-1 6-3 7z" fill="#ffe080"/><path d="M3 5c9 3 15 11 16 23C14 20 8 14 3 5z" fill="#2494e0"/></symbol>
<symbol id="flagw" viewBox="0 0 24 24"><path d="M2 5c4-3 6-2 9 0l-2 7c-3-2-5-2-8 0z" fill="#e8501c"/><path d="M12 6c3 2 6 2 10 0l-2 7c-4 2-6 1-9 0z" fill="#7cb828"/><path d="M1 13c3-2 5-2 8 0l-2 7c-3-2-5-1-7 0z" fill="#2c80d0"/><path d="M10 14c3 2 6 2 9 0l-2 7c-3 2-6 1-9 0z" fill="#f8c020"/></symbol>
<symbol id="help" viewBox="0 0 32 32"><circle cx="16" cy="16" r="15" fill="url(#gHelp)" stroke="#a9a9ac" stroke-width="2"/><circle cx="16" cy="16" r="13.500" fill="none" stroke="#fff"/><path d="M11 13c0-7 11-6 10 0-1 4-5 3-5 7" fill="none" stroke="#fff" stroke-width="3.500"/><circle cx="16" cy="24" r="2" fill="#fff"/></symbol>
<symbol id="ime" viewBox="0 0 16 16"><path d="M0 0h16v16H0z" fill="#48b0f4"/><path d="M2 2h12v12H2z" fill="#fff"/><path d="M5 2L3 7M4 4h8c1 4 0 8-3 9M4 8h6M8 6l-4 5h5" fill="none" stroke="#1428c8" stroke-width="1.500"/></symbol>
<symbol id="half" viewBox="0 0 16 16"><path d="M1 1h14v14H1z" fill="#fff"/><path d="M1 1h6v14H1z" fill="#808080"/><path d="M15 1v14H1" stroke="#222" fill="none"/></symbol>
<symbol id="lock" viewBox="0 0 16 16"><path d="M1 2l6-2 8 3-3 8-5 1-6-3z" fill="#a9cdec" stroke="#345"/><path d="M7 8h9v7H7z" fill="#e49420" stroke="#6a4000"/><path d="M9 8V5h4v3" fill="none" stroke="#6a4000"/></symbol>
<symbol id="listc" viewBox="0 0 16 16"><path d="M0 1h11v12H0z" fill="#fff" stroke="#555"/><path d="M0 1h11v3H0z" fill="#00c"/><path d="M2 6h7M2 8h6M2 10h5" stroke="#000"/><path d="M9 5v9l2-2 2 4 1-1-2-4h3z" fill="#fff" stroke="#000"/></symbol>
<symbol id="usb" viewBox="0 0 16 16"><path d="M2 0h6v5h2v9H0V5h2z" fill="#888c90" stroke="#555"/><circle cx="11" cy="11" r="5" fill="#24a834"/><path d="M8 11l2 3 4-6" fill="none" stroke="#fff" stroke-width="1.500"/></symbol>
<symbol id="flag" viewBox="0 0 16 16"><path d="M1 1v15" stroke="#555" stroke-width="2"/><path d="M2 2c5-3 7 2 13 0l-3 8c-4 2-6-2-10 0z" fill="#fff" stroke="#777"/></symbol>
<symbol id="net" viewBox="0 0 16 16"><path d="M4 3h12v10H4z" fill="#c0c4c8" stroke="#555"/><path d="M0 1h5v6H0zM2 7v6h6" fill="#fff" stroke="#555"/></symbol>
<symbol id="desk" viewBox="0 0 16 16"><path d="M0 1h16v12H0z" fill="url(#gDesk)" stroke="#345"/><path d="M1 9h4v3H1z" fill="#8e4"/></symbol>
<symbol id="mv" viewBox="0 0 12 12"><path d="M6 0v12M0 6h12" stroke="#1c3c64"/><path d="M6 0l2 2H4zM6 12l2-2H4zM0 6l2-2v4zM12 6l-2-2v4z" fill="#1c3c64"/></symbol>
<symbol id="selsz" viewBox="0 0 12 12"><path d="M1 0v8M5 11h7" stroke="#1c3c64"/><path d="M4 1h7v7H4z" fill="none" stroke="#1c3c64" stroke-dasharray="2 1"/></symbol>
<symbol id="imgsz" viewBox="0 0 12 12"><path d="M1 0v8M5 11h7" stroke="#1c3c64"/><path d="M4 1h7v7H4z" fill="#eef6ff" stroke="#1c3c64"/></symbol>
</svg>

<header class="titlebar">
  <svg class="s16"><use href="#palette"/></svg><h1>未命名 - 小畫家</h1>
  <div class="winbtns"><button aria-label="最小化"><svg viewBox="0 0 10 10"><path d="M1 8h6" stroke="#000" stroke-width="2"/></svg></button><button aria-label="還原"><svg viewBox="0 0 10 10"><path d="M3 1h6v5H7M1 4h6v5H1zM3 2h6M1 5h6" fill="none" stroke="#000"/></svg></button><button class="gap" aria-label="關閉"><svg viewBox="-1 -1 10 10"><use href="#xx" width="8" height="8"/></svg></button></div>
</header>

<nav class="tabs">
  <button class="filebtn" aria-label="檔案"><svg width="26" height="14" viewBox="0 0 26 14"><path d="M0 1h14v12H0z" fill="#fff"/><path d="M6 3h6M6 6h6M6 9h6" stroke="#2460a8" stroke-width="1"/><path d="M4 1v12" stroke="#2460a8"/><path d="M19 5h7l-4 4z" fill="#fff"/></svg></button>
  <button class="tab on">常用</button><button class="tab">檢視</button>
  <button class="helpbtn" aria-label="說明"><svg class="s14"><use href="#help"/></svg></button>
</nav>

<section class="ribbon">
  <div class="rg clip">
    <div class="rbody">
      <button class="big pasteb"><svg width="26" height="32"><use href="#paste"/></svg><span>貼<br>上<svg class="dn"><use href="#dn"/></svg></span></button>
      <div class="col"><button><svg class="s16"><use href="#cut"/></svg>剪下</button><button><svg class="s16"><use href="#copy"/></svg>複製</button></div>
    </div><h2>剪貼簿</h2>
  </div>
  <div class="rg image">
    <div class="rbody">
      <button class="big hot split"><svg width="30" height="25"><rect x="1" y="1" width="28" height="23" fill="none" stroke="#1c3c8c" stroke-dasharray="2 1"/></svg><span>選取</span><svg class="dn"><use href="#dn"/></svg></button>
      <div class="col three"><button><svg class="s14"><use href="#crop"/></svg>裁剪</button><button><svg class="s14"><use href="#resize"/></svg>調整大小</button><button><svg class="s14"><use href="#rotate"/></svg>旋轉<svg class="dn"><use href="#dn"/></svg></button></div>
    </div><h2>影像</h2>
  </div>
  <div class="rg tools">
    <div class="rbody">
      <div class="tbox"><button aria-label="鉛筆"><svg class="s16"><use href="#pencil"/></svg></button><button aria-label="填入色彩"><svg class="s18"><use href="#bucket"/></svg></button><button class="letter">A</button></div>
      <div class="tbox"><button aria-label="橡皮擦"><svg class="s16"><use href="#eraser"/></svg></button><button aria-label="色彩選擇器"><svg class="s16"><use href="#dropper"/></svg></button><button aria-label="放大鏡"><svg class="s16"><use href="#mag"/></svg></button></div>
    </div><h2>工具</h2>
  </div>
  <div class="rg brushes">
    <div class="rbody"><button class="big"><svg width="32" height="32"><use href="#brush"/></svg><span>筆刷</span><svg class="dn"><use href="#dn"/></svg></button></div><h2></h2>
  </div>
  <div class="rg shapes">
    <div class="rbody">
      <div class="gallery">
        <svg width="140" height="58" fill="#f6faff" stroke="#1c66a8" stroke-width="1.200"><path d="M2 4l16 12" fill="none"/><path d="M23 15c5 0 4-9 8-9 3 0 1 8 4 8s2-5 3-10" fill="none"/><circle cx="50" cy="10" r="7"/><path d="M63 4h14v12H63z"/><rect x="83" y="4" width="15" height="12" rx="3"/><path d="M103 16l3-11h8l-3 6h6v5z"/><path d="M130 4l7 12h-14z"/>
        <path d="M3 22v14h14zM30 23l7 7-7 7-7-7zM50 22l7 6-3 8h-8l-3-8zM70 22l7 4v8l-7 4-7-4v-8zM82 27h7v-4l7 7-7 7v-4h-7zM118 27h-7v-4l-7 7 7 7v-4h7zM130 23l7 7h-4v7h-6v-7h-4z"/>
        <path d="M7 42h6v7h4l-7 7-7-7h4zM30 42l2 6 6 2-6 2-2 6-2-6-6-2 6-2zM50 42l2 5h5l-4 3 2 6-5-3-5 3 2-6-4-3h5zM70 42l2 4h5l-2 4 2 4h-5l-2 4-2-4h-5l2-4-2-4h5zM85 43h10q3 0 3 3v5q0 3-3 3h-5l-3 3v-3h-2q-3 0-3-3v-5q0-3 3-3z"/><path d="M103 49c0-8 15-8 15 0 0 5-6 6-10 5l-3 3v-4q-2-1-2-4zM126 44c2-3 5-2 6 0 4-1 6 2 4 4 3 3 0 6-3 5-2 3-6 2-6 0-5 1-6-2-4-4-2-3 1-6 3-5z"/></svg>
        <div class="gscroll"><svg class="dn up dim"><use href="#dn"/></svg><svg class="dn"><use href="#dn"/></svg><svg class="dn"><use href="#dn"/></svg></div>
      </div>
      <div class="col off"><button disabled><svg class="s16"><use href="#outline"/></svg>外框<svg class="dn"><use href="#dn"/></svg></button><button disabled><svg class="s16"><use href="#fillg"/></svg>填滿<svg class="dn"><use href="#dn"/></svg></button></div>
    </div><h2>形狀</h2>
  </div>
  <div class="rg size">
    <div class="rbody"><button class="big" disabled><svg width="32" height="32" fill="#7a8cb0"><path d="M0 1h32v1H0zM0 6h32v2H0zM0 13h32v4H0zM0 21h32v7H0z"/></svg><span>大小</span><svg class="dn"><use href="#dn"/></svg></button></div><h2></h2>
  </div>
  <div class="rg colors">
    <div class="rbody">
      <button class="big hot c1"><i></i><span>色彩 1</span></button>
      <button class="big c2"><i></i><span>色彩 2</span></button>
      <div class="pal">
        <b style="--c:#000"></b><b style="--c:#7f7f7f"></b><b style="--c:#880015"></b><b style="--c:#ed1c24"></b><b style="--c:#ff7f27"></b><b style="--c:#fff200"></b><b style="--c:#22b14c"></b><b style="--c:#00a2e8"></b><b style="--c:#3f48cc"></b><b style="--c:#a349a4"></b>
        <b style="--c:#fff"></b><b style="--c:#c3c3c3"></b><b style="--c:#b97a57"></b><b style="--c:#ffaec9"></b><b style="--c:#ffc90e"></b><b style="--c:#efe4b0"></b><b style="--c:#b5e61d"></b><b style="--c:#99d9ea"></b><b style="--c:#7092be"></b><b style="--c:#c8bfe7"></b>
        <b class="e"></b><b class="e"></b><b class="e"></b><b class="e"></b><b class="e"></b><b class="e"></b><b class="e"></b><b class="e"></b><b class="e"></b><b class="e"></b>
      </div>
      <button class="big edit"><svg width="28" height="32"><use href="#rainbow"/></svg><span>編輯色彩</span></button>
    </div><h2>色彩</h2>
  </div>
</section>

<div class="quick">
  <button aria-label="儲存"><svg class="s14"><use href="#qsave"/></svg></button><button aria-label="復原"><svg class="s14"><use href="#qundo"/></svg></button><button aria-label="取消復原"><svg class="s14"><use href="#qredo"/></svg></button><button aria-label="填入"><svg class="s16"><use href="#bucket"/></svg></button><button aria-label="列印"><svg class="s14"><use href="#qprint"/></svg></button><button aria-label="自訂"><svg width="8" height="8" viewBox="0 0 8 8"><path d="M0 0h8v1H0zM0 4h8L4 8z"/></svg></button>
</div>

<div class="work">
<main class="doc">
  <nav class="menu"><a href="#">檔案(F)</a><a href="#">編輯(E)</a><a href="#">檢視(V)</a><a href="#">分析(A)</a><a href="#">繪圖(C)</a><a href="#">實體(S)</a><a href="#">轉換(X)</a><a href="#">機床類型(M)</a><a href="#">刀具路徑(T)</a><a href="#">屏幕(R)</a><a href="#">設定(I)</a><a href="#">說明(H)</a></nav>
  <div class="bar">
    <div class="tg"><svg><use href="#new"/></svg><svg><use href="#open"/></svg><svg><use href="#floppy"/></svg><svg><use href="#print"/></svg><svg><use href="#preview"/></svg><svg><use href="#plug"/></svg></div>
    <div class="tg"><svg><use href="#undo"/></svg><svg><use href="#redo"/></svg></div>
    <div class="tg"><svg><use href="#fit"/></svg><svg><use href="#repaint"/></svg><hr><svg><use href="#zwin"/></svg><svg><use href="#ztgt"/></svg><svg><use href="#zeq"/></svg><hr><svg><use href="#zm2"/></svg><svg><use href="#zm"/></svg><hr><svg><use href="#bino1"/></svg><svg><use href="#bino2"/></svg><svg><use href="#bino3"/></svg></div>
    <div class="tg"><svg><use href="#cubeT"/></svg><svg><use href="#cubeL"/></svg><svg><use href="#cubeR"/></svg><svg><use href="#cube"/></svg></div>
    <div class="tg"><svg><use href="#cubeRed"/></svg><i></i></div>
    <div class="tg"><svg><use href="#globe"/></svg><i></i><svg><use href="#ball"/></svg><i></i><svg><use href="#block"/></svg><svg><use href="#blockW"/></svg></div>
    <div class="tg"><svg><use href="#pen"/></svg><svg><use href="#pens"/></svg><i></i><hr><svg><use href="#tool"/></svg><i class="dim"></i></div>
    <div class="sel">
      <button class="txt">全部...</button><button class="txt">單一...</button><button class="sq m"><svg><use href="#curFlash"/></svg></button>
      <span class="combo small"><select aria-label="選取方式"><option>範圍內</option></select><span class="arr"><svg class="dn"><use href="#dn"/></svg></span></span>
      <button class="flatb"><svg><use href="#cursor"/></svg><svg class="dn"><use href="#dn"/></svg></button>
      <button class="sq"><svg><use href="#cursorG"/></svg></button><button class="sq m"><svg><use href="#blob"/></svg></button><button class="sq"><svg><use href="#blob"/></svg></button><button class="sq"><svg><use href="#blob"/></svg></button><button class="sq m"><svg><use href="#blob"/></svg></button><button class="sq"><svg><use href="#hatchCube"/></svg></button><button class="sq m"><svg><use href="#bend"/></svg></button><button class="sq m"><svg><use href="#curCheck"/></svg></button><button class="sq"><svg><use href="#no"/></svg></button><button class="sq m"><svg><use href="#disc"/></svg></button><button class="sq"><svg><use href="#qm"/></svg></button>
    </div>
  </div>
  <div class="bar">
    <div class="tg"><svg><use href="#plus"/></svg><i></i><svg><use href="#line"/></svg><i></i><svg><use href="#circ"/></svg><i></i><svg><use href="#rect"/></svg><i></i><svg><use href="#fillet"/></svg><i></i><svg><use href="#spline"/></svg><i></i><svg><use href="#cyl"/></svg><i></i></div>
    <div class="tg"><svg><use href="#trim"/></svg><svg><use href="#brk"/></svg><i></i></div>
    <div class="tg"><svg><use href="#x0"/></svg><svg><use href="#x1"/></svg><svg><use href="#x2"/></svg><svg><use href="#x3"/></svg><svg><use href="#x4"/></svg><svg><use href="#x5"/></svg><svg><use href="#x6"/></svg><svg><use href="#x7"/></svg><hr><svg><use href="#x8"/></svg><i></i><svg><use href="#x9"/></svg><svg><use href="#x10"/></svg><i></i></div>
    <div class="tg"><svg class="press"><use href="#panel"/></svg><svg><use href="#waves"/></svg></div>
    <div class="tg"><svg><use href="#dup1"/></svg><svg><use href="#dup2"/></svg></div>
    <div class="tg"><svg><use href="#surf"/></svg><i></i></div>
    <div class="tg"><svg><use href="#lv1"/></svg><svg><use href="#lv2"/></svg><svg><use href="#lv3"/></svg><svg><use href="#lv4"/></svg></div>
    <div class="tg apart"><svg class="press"><use href="#sim1"/></svg></div>
    <div class="tg wide"><svg><use href="#sim2"/></svg></div>
    <div class="tg wide"><svg><use href="#orange"/></svg></div>
    <div class="tg wide"><svg><use href="#blue"/></svg></div>
    <div class="tg wide"><svg><use href="#orange"/></svg></div>
  </div>
  <div class="split2">
    <aside class="ops">
      <div class="ophead"><span>刀具操作管理器</span><svg class="dn"><use href="#dn"/></svg><span>X</span></div>
      <div class="optabs"><button class="on">刀具路徑</button><button>實體管理器</button></div>
      <div class="opbar"><svg><use href="#p1"/></svg><svg><use href="#p2"/></svg><hr><svg><use href="#p3"/></svg><svg><use href="#p4"/></svg><hr><svg><use href="#p5"/></svg><svg><use href="#p6"/></svg><b>G1</b><svg><use href="#p8"/></svg><hr><svg><use href="#p9"/></svg><hr><svg><use href="#p10"/></svg></div>
      <div class="opbar"><svg><use href="#q1"/></svg><svg><use href="#q2"/></svg><svg><use href="#q3"/></svg><hr><svg><use href="#q4"/></svg><svg><use href="#q5"/></svg><svg><use href="#q6"/></svg><svg><use href="#q7"/></svg><hr><svg><use href="#q8"/></svg><svg><use href="#q9"/></svg></div>
      <ul class="tree">
        <li><em class="minus"></em><svg><use href="#grp"/></svg>機床群組組-1</li>
        <li class="l2"><em></em><svg><use href="#attr"/></svg>屬性 - MM 3S</li>
        <li class="l2"><em class="minus"></em><svg><use href="#tg"/></svg>M|s 1</li>
        <li class="l3"><em></em><svg><use href="#fold"/></svg>1 - 曲面粗加工挖槽 - [WCS: 俯檢視] - [刀具面: 俯檢視]</li>
        <li class="l3"><em></em><svg><use href="#fold"/></svg>2 - 2D挖槽 (標準) - [WCS: 俯檢視] - [刀具面: 俯檢視]</li>
        <li class="l3"><em></em><svg><use href="#fold"/></svg>3 - 沿邊五軸 - [WCS: 俯檢視] - [刀具面: 俯檢視]</li>
        <li class="l3 cur"><em class="none"></em><svg><use href="#ins"/></svg><mark></mark></li>
        <li class="l3"><em></em><svg><use href="#fold"/></svg>4 - 沿邊五軸 - [WCS: 俯檢視] - [刀具面: 俯檢視]</li>
        <li class="l3"><em></em><svg><use href="#fold"/></svg>5 - 五軸 - 深孔啄鑽(G83) - [WCS: 俯檢視] - [刀具面: 俯檢視]</li>
        <li class="l3"><em></em><svg><use href="#fold"/></svg>6 - 五軸 - 深孔啄鑽(G83) - [WCS: 俯檢視] - [刀具面: 俯檢視]</li>
        <li class="l3"><em></em><svg><use href="#fold"/></svg>7 - 五軸 - 深孔啄鑽(G83) - [WCS: 俯檢視] - [刀具面: 俯檢視]</li>
        <li class="l3"><em></em><svg><use href="#fold"/></svg>8 - 五軸 - 深孔啄鑽(G83) - [WCS: 俯檢視] - [刀具面: 俯檢視]</li>
        <li class="l3"><em></em><svg><use href="#fold"/></svg>9 - 五軸 - 深孔啄鑽(G83) - [WCS: 俯檢視] - [刀具面: 俯檢視]</li>
        <li class="l3"><em></em><svg><use href="#fold"/></svg>10 - 五軸 - 深孔啄鑽(G83) - [WCS: 俯檢視] - [刀具面: 俯檢視]</li>
        <li class="l3"><em></em><svg><use href="#fold"/></svg>11 - 五軸 - 深孔啄鑽(G83) - [WCS: 俯檢視] - [刀具面: 俯檢視]</li>
        <li class="l3"><em></em><svg><use href="#foldC"/></svg>12 - 五軸 - 深孔啄鑽(G83) - [WCS: 俯檢視] - [刀具面: 俯檢視]</li>
      </ul>
    </aside>
    <div class="view">
      <svg class="scene" aria-hidden="true"><g transform="translate(-443 -272)" fill="none" shape-rendering="crispEdges">
        <defs><pattern id="wr" width="13" height="11" patternUnits="userSpaceOnUse" patternTransform="rotate(50)"><path d="M0 0h13M0 0v11M0 6l13-6" stroke="#f00"/></pattern>
        <pattern id="wg" width="11" height="11" patternUnits="userSpaceOnUse" patternTransform="rotate(50)"><path d="M0 0h11M0 0v11M0 5l11 4" stroke="#8a8a8a"/></pattern>
        <pattern id="wp" width="4" height="5" patternUnits="userSpaceOnUse"><path d="M0 0h4M0 0v5" stroke="#c493f0"/></pattern></defs>
        <path d="M704 402c2-4 12-4 14 0" stroke="#c44"/>
        <path d="M1285 895l52 45M1092 944l58 49M1344 970l-4 24" stroke="#f00"/>
        <path d="M1329 948c2-14 14-24 24-22 8 1 14 5 18 11l38 33c5 6 4 15 2 23h-35l-40-32q-8-4-7-13z" fill="url(#wg)" stroke="#8a8a8a"/>
        <path d="M1342 958l14-20 18 2 36 31c3 7 3 15 1 22h-35l-34-28z" fill="url(#wr)"/>
        <path d="M1342 958l34 35M1356 938l54 33M1366 934l44 37c3 7 3 15 1 22M1376 993c4-14 14-24 34-22" stroke="#f00"/>
        <path d="M1286 686l35-14 24-2M1286 694l56-19M1286 701l56-19M1286 708l57-19M1286 715l57-18M1288 724l55-19M1288 724v-40M1300 681l-12-12M1343 670l-1 35" stroke="#c493f0"/>
        <path d="M1347 670l-2 22-5 14M1346 670l-3 30M1344 672l-3 34" stroke="#8a8a8a" stroke-width="2"/>
        <path d="M1318 670v23c0 6 11 6 11 0v-23M1321 670v27M1325 670v27M1318 676h11M1318 682h11M1318 688h11" stroke="#9a8ab0"/>
        <path d="M1286 727l14 9c6 5 6 12 6 20 0 20 0 50-8 72l-5 4h-7" stroke="#8a8a8a" stroke-width="2"/>
        <path d="M1286 736l13 6 6 12v20l-12 12-7 2z" fill="url(#wp)" stroke="#c493f0"/>
        <path d="M1286 792l14-10M1286 798l14-8M1286 805l14-8M1286 812l12-8M1286 819l11-8M1286 826l9-8M1296 792v34M1303 770l-3 50M1301 780l-3 42" stroke="#8a8a8a"/>
      </g></svg>
      <svg class="axis left" width="40" height="52"><path d="M10 19l-1 15" stroke="#00f"/><path d="M9 34l16-6" stroke="green"/><path d="M10 35l11 10" stroke="red"/><text x="6" y="12" fill="#00f">Z</text><text x="28" y="28" fill="green">Y</text><text x="23" y="52" fill="red">X</text><text x="4" y="44" fill="#ccc">繪</text></svg>
      <svg class="axis right" width="40" height="52"><path d="M10 19l-1 15" stroke="#00f"/><path d="M9 34l16-6" stroke="green"/><path d="M10 35l11 10" stroke="red"/><text x="6" y="12" fill="#00f">Z</text><text x="28" y="28" fill="green">Y</text><text x="23" y="52" fill="red">X</text><text x="4" y="44" fill="#ccc">刀</text></svg>

      <form class="win sim">
        <div class="cap"><h3>Machine Simulation</h3><button type="button" class="cls" aria-label="Close"><svg><use href="#xx"/></svg></button></div>
        <div class="dtabs"><button type="button" class="on">Simulation</button><button type="button">Post Settings</button><button type="button">Machine Definition</button></div>
        <div class="page">
          <div class="left">
            <fieldset class="f1"><legend>Machine</legend><span class="combo blue"><svg class="mi" viewBox="0 0 16 16"><path d="M0 0h16v16H0z" fill="#24509a"/><path d="M3 4l5-3 6 3-5 3zM7 8l7 6-5 1z" fill="#3aa05a"/><path d="M3 6l5 3v6l-5-2z" fill="#4a90d8"/></svg><select aria-label="Machine"><option>mazak-variaxis 730-5x</option></select><span class="arr"><svg class="dn"><use href="#dn"/></svg></span></span></fieldset>
            <fieldset class="f2"><legend>Workpiece</legend>
              <div class="row"><label for="geo">Geometry</label><span class="combo"><select id="geo"><option>All elements</option></select><span class="arr"><svg class="dn"><use href="#dn"/></svg></span></span></div>
              <div class="row"><label for="pos">Position</label><span class="combo"><select id="pos"><option>Automatic</option></select><span class="arr"><svg class="dn"><use href="#dn"/></svg></span></span></div>
            </fieldset>
            <fieldset class="f3"><legend>Fixture</legend><span class="combo"><select aria-label="Fixture"><option>None</option></select><span class="arr"><svg class="dn"><use href="#dn"/></svg></span></span></fieldset>
            <fieldset class="f4"><legend>Stock</legend><span class="combo"><select aria-label="Stock"><option>Don&emsp;&nbsp;use stock</option></select><span class="arr"><svg class="dn"><use href="#dn"/></svg></span></span></fieldset>
            <fieldset class="f5"><legend>Tolerances</legend>
              <div class="row"><label for="t1">Simulation tolerance</label><input id="t1" value="0.3"></div>
              <div class="row"><label for="t2">Stock to leave on Target Workpiece</label><input id="t2" value="0"></div>
            </fieldset>
            <fieldset class="f6"><legend>Misc</legend><label class="chk"><input type="checkbox">Autostart</label></fieldset>
          </div>
          <div class="rightc">
            <fieldset class="f7"><legend>Preview</legend>
              <svg class="machine" viewBox="0 0 250 239"><path d="M0 0h250v239H0z" fill="#fefefa"/><path d="M80 35l20-19 36 9 9-3 11 6V120H80z" fill="#a9c4aa" stroke="#2a3a2c"/><path d="M108 42l27-20v98h-27z" fill="#4c584c"/><path d="M136 27l20-16v109h-20z" fill="#4c584c"/><path d="M80 35l20-19 36 7-28 19zM110 16l15-13 31 10-19 15-8-6z" fill="#bcd8bf" stroke="#2a3a2c"/><path d="M129 22l6 3v90h-6z" fill="#9db89e" stroke="#2a3a2c"/><path d="M70 198l43 12 12-10V180H70z" fill="#bcd8bf"/><path d="M80 203l31 8 10-11M85 198l28 6" fill="none" stroke="#2a3a2c"/></svg>
            </fieldset>
            <fieldset class="f6"><legend>Colors and shortcuts</legend><label class="chk"><input type="checkbox" checked>Use Mastercam Settings</label></fieldset>
          </div>
        </div>
        <div class="foot"><button type="button">Default</button><span></span><button type="button">Simulate</button><button type="button" aria-label="OK"><svg><use href="#ok"/></svg></button><button type="button" aria-label="Cancel"><svg><use href="#bad"/></svg></button><button type="button" aria-label="Help"><svg><use href="#qm"/></svg></button></div>
      </form>

      <div class="win msg" role="alertdialog">
        <div class="cap"><svg viewBox="0 0 14 12"><path d="M0 0h14v12H0z" fill="#fff"/><path d="M1 2h6v8H1z" fill="#2c8c80"/><path d="M8 2h3v8H8z" fill="#d8e0e4"/><path d="M12 2h1v4h-1z" fill="#246"/></svg><h3>Machine Simulation</h3><button class="cls" aria-label="Close"><svg><use href="#xx"/></svg></button></div>
        <div class="mbody"><svg><use href="#help"/></svg><p>Can't load machine configuration files.Please check configuration<br>file(s) for mazak-variaxis 730-5x</p></div>
        <div class="mfoot"><button>確定</button></div>
      </div>
    </div>
  </div>
</main>
<div class="vs"><button aria-label="上"><svg class="dn up"><use href="#dn"/></svg></button><span class="trk a"></span><span class="thumb"></span><span class="trk b"></span><button aria-label="下"><svg class="dn"><use href="#dn"/></svg></button></div>
<div class="hs"><button aria-label="左"><svg viewBox="0 0 4 8"><path d="M4 0v8L0 4z"/></svg></button><span class="thumb"></span><span class="trk"></span><button aria-label="右"><svg viewBox="0 0 4 8"><path d="M0 0v8l4-4z"/></svg></button></div>
</div>

<div class="status"><span class="c"><svg><use href="#mv"/></svg></span><span class="c"><svg><use href="#selsz"/></svg></span><span class="c"><svg><use href="#imgsz"/></svg>1920 × 1080像素</span><span class="c"></span><span class="c grow"></span>
  <span class="zoom"><label for="z">100%</label><button aria-label="縮小">−</button><input id="z" type="range" min="0" max="100" value="52"><button aria-label="放大">+</button></span></div>

<footer class="task">
  <button class="start"><svg class="s16"><use href="#flagw"/></svg>開始</button>
  <button class="ap"><svg><use href="#ie"/></svg></button><button class="ap"><svg><use href="#chrome"/></svg></button><button class="ap down"><svg><use href="#palette"/></svg></button><button class="ap up stack"><svg><use href="#explorer"/></svg></button><button class="ap"><svg><use href="#excel"/></svg></button><button class="ap"><svg><use href="#mcam"/></svg></button><button class="ap up"><svg><use href="#x6i"/></svg></button><button class="ap"><svg><use href="#notes"/></svg></button><button class="ap up"><svg><use href="#media"/></svg></button><button class="ap"><svg><use href="#npad"/></svg></button><button class="ap up"><svg><use href="#space"/></svg></button>
  <div class="lang"><svg class="s16"><use href="#ime"/></svg><b>中</b><svg class="s16"><use href="#half"/></svg><svg class="s16"><use href="#lock"/></svg><svg class="s16"><use href="#listc"/></svg><svg class="s16 hp"><use href="#help"/></svg><svg class="rs" viewBox="0 0 8 8"><path d="M2 0h6v4H6M0 3h6v4H0z" fill="none" stroke="#000"/></svg></div>
  <div class="tray"><svg class="s8" viewBox="0 0 8 10"><path d="M1 4l3-3 3 3M1 9l3-3 3 3" fill="none" stroke="#000" stroke-width="1.500"/></svg><svg class="s16"><use href="#usb"/></svg><svg class="s16"><use href="#flag"/></svg><svg class="s16"><use href="#net"/></svg><time>上午 11:25<br>2014/1/16</time><svg class="s16"><use href="#desk"/></svg></div>
  <span class="wm">三维网www.3dportal.cn</span>
</footer>
</body>
</html>
```
FILE: styles.css
```css
*{box-sizing:border-box}
html,body{height:100%}
body{margin:0;display:flex;flex-direction:column;min-height:100vh;overflow:hidden;background:#d4d0c8;font:12px/16px "Liberation Serif","Noto Sans CJK TC",serif;color:#000}
h1,h2,h3,p,ul{margin:0;padding:0;font-weight:normal}
button{font:inherit;color:inherit;border:0;padding:0;margin:0;background:none;display:flex;align-items:center;justify-content:center}
select,input{font:inherit;margin:0}
svg{display:block;flex:none;overflow:visible}
.defs{position:absolute;width:0;height:0}
.s8{width:8px;height:10px}
.s14{width:14px;height:14px}
.s16{width:16px;height:16px}
.s18{width:18px;height:18px}
.dn{width:7px;height:4px;fill:#000}
.up.dn{transform:rotate(180deg)}
.dn.dim{fill:#a0a0a0}

.titlebar{height:19px;flex:none;display:flex;align-items:center;gap:3px;padding:0 2px;background:linear-gradient(90deg,#0a246a,#a6caf0);border-bottom:1px solid #d4d0c8;color:#fff}
.titlebar h1{flex:1;font:bold 13px/16px "Liberation Sans","Noto Sans CJK TC",sans-serif}
.winbtns{display:flex}
.winbtns button,.cls{width:16px;height:14px;background:#d4d0c8;border:1px solid;border-color:#fff #404040 #404040 #fff}
.winbtns .gap{margin-left:2px}
.winbtns svg{width:10px;height:10px}

.tabs{height:26px;flex:none;display:flex;align-items:flex-start;padding-top:1px;background:#dfe9f5;border-bottom:1px solid #b5c7de;font:12px/16px "Noto Sans CJK TC",sans-serif;color:#1e395b}
.filebtn{width:56px;height:22px;background:linear-gradient(#4a8ad0,#2458a4 50%,#174a92 51%,#3c8cd4);border:1px solid #1a4684;border-radius:0 2px 0 0}
.tab{width:57px;height:25px;padding-bottom:2px}
.tab.on{width:48px;margin-left:2px;background:#f7fbff;border:1px solid #b5c7de;border-bottom:0;border-radius:2px 2px 0 0}
.helpbtn{margin:4px 4px 0 auto}

.ribbon{height:101px;flex:none;display:flex;background:linear-gradient(#f5faff,#e6eff9 30%,#dae5f3 60%,#e0eaf6);border-bottom:2px solid #9fafc8;font:12px/16px "Noto Sans CJK TC",sans-serif;color:#1e395b}
.rg{display:flex;flex-direction:column;height:88px;margin-top:4px;border-right:1px solid #a9b9d0;box-shadow:1px 0 0 #f5f9ff;padding:0 5px}
.rg h2{font-size:12px;line-height:16px;height:16px;margin-top:5px;text-align:center;color:#72839c}
.rbody{height:71px;flex:none;display:flex}
.ribbon .dn{fill:#4a5c78;width:6px;height:4px}
.big{width:42px;height:71px;flex-direction:column;justify-content:flex-start;padding-top:3px}
.big span{line-height:16px;margin-top:2px;white-space:nowrap}
.big>.dn{margin-top:6px}
.big:disabled,.off button{color:#98a4b4}
.ribbon .big:disabled .dn,.ribbon .off .dn{fill:#98a4b4}
.col{display:flex;flex-direction:column;gap:6px;padding-top:2px}
.col button{justify-content:flex-start;gap:4px;height:16px}
.clip{width:104px}
.pasteb{width:46px}
.clip .col button{gap:3px}
.pasteb span .dn{display:inline-block;margin-left:3px;vertical-align:3px}
.hot{background:linear-gradient(#fbd597,#fcc66c 40%,#fdb94e 41%,#fed986);border:1px solid #c69b34;border-radius:2px}
.split{background:linear-gradient(#fbd597,#fcc670 50%,#c69b34 50%,#c69b34 53%,#fdbf58 53%,#fed986)}
.split svg:first-child{margin:3px 0 4px}
.image{width:127px}
.image .col{padding-left:4px}
.tools{width:80px}
.tools .rbody{flex-direction:column;gap:9px;padding-top:11px}
.tbox{display:flex;height:22px;border:1px solid #b0bfd4;border-radius:2px;background:#f0f6fd}
.tbox button{flex:1}
.tbox button+button{border-left:1px solid #c8d4e4}
.letter{font:bold 18px/20px "Liberation Serif",serif;color:#24406c}
.brushes{width:53px}
.shapes{width:230px}
.gallery{width:158px;height:60px;margin-top:3px;display:flex;background:#f7fafe;border:1px solid #b0bfd4}
.gscroll{width:16px;display:flex;flex-direction:column;justify-content:space-around;align-items:center;background:#e6eef8}
.off{padding-left:6px}
.off button{gap:3px}
.size{width:54px}
.colors{width:368px}
.colors i{display:block;border:1px solid #808080;background:#000;width:32px;height:32px;outline:1px solid #b0a080}
.colors .c1{padding-top:2px}
.colors .c2 i{width:24px;height:24px;margin:4px 0;background:#fff;outline:0}
.pal{display:grid;grid-template-columns:repeat(10,20px);grid-auto-rows:20px;gap:2px;margin:1px 0 0 1px}
.pal b{border:1px solid #808080;background:var(--c);box-shadow:inset 0 0 0 1px #fff}
.pal .e{background:#e2ebf6;box-shadow:none}
.edit{width:50px;margin-left:2px}
.edit span,.c2 span{margin-top:2px}

.quick{height:26px;flex:none;display:flex;align-items:center;gap:8px;padding:0 6px 2px;background:#dfe9f5;border-bottom:1px solid #a9b4c6}
.quick button:last-child{margin-left:2px}

.work{flex:1;min-height:0;display:grid;grid-template-columns:1fr 16px;grid-template-rows:1fr 17px;background:#ccd9ea;border-top:1px solid #808080}
.doc{margin-left:5px;border-left:1px dashed #0a246a;background:#d4d0c8;min-width:0;min-height:0;display:flex;flex-direction:column}
.menu{height:23px;flex:none;display:flex;align-items:center;gap:12px;padding:0 3px;border-bottom:1px solid #808080}
.menu a{color:#808080;text-decoration:none;white-space:nowrap}
.bar{height:38px;flex:none;display:flex;gap:1px;border-top:1px solid #fff;border-bottom:1px solid #808080}
.tg{display:flex;align-items:center;border-left:1px solid #fff;border-right:1px solid #808080;padding:0 2px 0 8px}
.tg::before{content:"";width:2px;height:30px;margin:0 2px 0 -4px;border-left:1px solid #fff;border-right:1px solid #808080}
.tg svg{width:31px;height:24px}
.tg i{width:13px;height:4px;background:#000;clip-path:polygon(4px 0,11px 0,7px 4px)}
.tg i.dim{background:#999}
.tg hr{width:2px;height:26px;margin:0 3px;border:0;border-left:1px solid #808080;border-right:1px solid #fff}
.tg .press{width:31px;height:30px;padding:2px;background:#eceae6;border:1px solid;border-color:#808080 #fff #fff #808080}
.apart{margin-left:18px}
.tg.wide{padding-right:3px}
.sel{height:30px;display:flex;align-items:center;padding:0 8px 2px 13px;background:#ffffcc;border-right:1px solid #808080;border-bottom:1px solid #808080}
.sel button{height:23px}
.txt,.sq{background:#d4d0c8;border:1px solid;border-color:#fff #404040 #404040 #fff}
.txt{width:47px;margin-right:8px}
.sq{width:23px;margin-right:1px}
.sq.m{margin-right:6px}
.sq svg{width:21px;height:21px}
.flatb{width:37px;background:#d4d0c8;margin:0 3px 0 10px;gap:4px}
.flatb svg:first-child{width:21px;height:21px}

.combo{display:flex;height:20px;background:#fff;border:1px solid;border-color:#808080 #fff #fff #808080;box-shadow:inset 1px 1px 0 #404040,inset -1px -1px 0 #d4d0c8;padding:2px}
.combo select{flex:1;min-width:0;appearance:none;border:0;background:none;padding:0 1px;line-height:14px;color:inherit;border-radius:0}
.arr{width:16px;background:#d4d0c8;border:1px solid;border-color:#fff #404040 #404040 #fff;display:flex;align-items:center;justify-content:center}
.small{width:71px;margin-top:2px}

.split2{flex:1;min-height:0;display:flex}
.ops{width:437px;flex:none;display:flex;flex-direction:column;padding-right:6px;border-right:1px solid #606060}
.ophead{height:20px;flex:none;display:flex;align-items:center;gap:10px;padding:0 0 4px 2px}
.ophead span:first-child{flex:1}
.optabs{height:20px;flex:none;display:flex;align-items:flex-end;border-bottom:1px solid #fff;margin-right:-6px}
.optabs button{height:17px;padding:0 5px;border-right:1px solid #404040;border-top:1px solid #fff}
.optabs .on{height:20px;padding-bottom:3px}
.opbar{height:31px;flex:none;width:279px;display:flex;align-items:center;gap:7px;padding-left:9px;border-bottom:1px solid #808080}
.optabs+.opbar{margin-top:3px;height:30px;border-top:1px solid #808080}
.opbar+.opbar{border-bottom:0}
.opbar svg,.opbar b{width:16px;height:16px;color:#808080}
.opbar hr{width:1px;height:20px;border:0;margin:0 -1px 0 -1px;background:#808080}
.tree{flex:1;min-height:0;margin:5px 0 0 3px;background:#fff;border:1px solid;border-color:#606060 #fff #fff #606060;list-style:none;padding-top:1px;overflow:hidden}
.tree li{display:flex;align-items:center;height:16px;padding-left:7px;white-space:pre;background:repeating-linear-gradient(90deg,#888 0 1px,#fff 1px 2px) 12px 8px/10px 1px no-repeat}
.tree .l2{padding-left:26px;background:repeating-linear-gradient(90deg,#888 0 1px,#fff 1px 2px) 32px 8px/8px 1px no-repeat,repeating-linear-gradient(#888 0 1px,#fff 1px 2px) 30px 0/1px 100% no-repeat}
.tree .l3{padding-left:45px;background:repeating-linear-gradient(90deg,#888 0 1px,#fff 1px 2px) 50px 8px/10px 1px no-repeat,repeating-linear-gradient(#888 0 1px,#fff 1px 2px) 49px 0/1px 100% no-repeat}
.tree svg{width:16px;height:15px;margin-right:4px}
.tree em{width:9px;height:9px;margin-right:6px;border:1px solid #000;background:linear-gradient(#000,#000) 1px 3px/5px 1px no-repeat,linear-gradient(#000,#000) 3px 1px/1px 5px no-repeat,#fff}
.tree .minus{background:linear-gradient(#000,#000) 1px 3px/5px 1px no-repeat,#fff}
.tree .none{border:0;background:none}
.tree mark{width:216px;height:16px;background:#0a246a}

.view{flex:1;position:relative;min-width:0;background:#000;overflow:hidden}
.scene{position:absolute;inset:0;width:100%;height:100%}
.axis{position:absolute;top:27px;font:bold 12px "Liberation Serif","Noto Sans CJK TC",serif}
.axis.left{left:33px}
.axis.right{right:9px}

.win{position:absolute;background:#d4d0c8;border:1px solid;border-color:#d4d0c8 #404040 #404040 #d4d0c8;box-shadow:inset 1px 1px 0 #fff,inset -1px -1px 0 #808080;padding:2px}
.cap{height:18px;display:flex;align-items:center;gap:3px;padding:0 1px 0 2px;background:linear-gradient(90deg,#0a246a,#a6caf0);color:#fff}
.cap h3{flex:1;font-weight:bold;font-size:13px;line-height:16px}
.cls svg{width:8px;height:8px}
.sim{left:202px;top:130px;width:641px;display:flex;flex-direction:column}
.dtabs{display:flex;align-items:flex-end;height:27px;padding:0 7px}
.dtabs button{height:19px;padding:0 2px;border:1px solid;border-color:#fff #404040 transparent #fff;border-radius:2px 2px 0 0;margin-right:1px}
.dtabs .on{height:22px;padding:0 4px 2px 5px;margin-right:0}
.page{min-height:458px;margin:0 7px 0 6px;display:flex;gap:6px;padding:4px 7px 0 8px;border:1px solid;border-color:#fff #404040 #404040 #fff}
.left{width:334px}
.rightc{width:265px}
.left,.rightc{display:flex;flex-direction:column}
fieldset{min-width:0;margin:0;padding:0 8px;border:1px solid #808080;box-shadow:1px 1px 0 #fff,inset 1px 1px 0 #fff}
legend{padding:0 3px;margin-left:-2px;height:14px;line-height:14px;background:#d4d0c8}
.f1{height:44px;margin-bottom:1px}
.f1 .combo{height:21px;margin-top:1px}
.f2{height:89px;margin-bottom:1px}
.f2 .row{height:24px}
.f2 .row:nth-child(2){height:22px}
.f2 label{width:55px}
.f2 .combo{width:197px}
.row{display:flex;align-items:center}
.f3{height:43px;margin-bottom:1px}
.f4{height:42px;margin-bottom:1px}
.f3 .combo,.f4 .combo{width:249px;margin-top:2px}
.f5{height:65px;margin-bottom:1px}
.f5 .row{height:24px;justify-content:space-between}
.f5 .row:nth-child(2){height:22px}
.f5 input{width:54px;height:20px;padding:0 3px 4px;border:1px solid;border-color:#404040 #fff #fff #404040}
.f6{height:35px}
.f7{height:266px;margin-bottom:22px;padding:0 5px}
.machine{width:250px;height:239px;margin-top:1px}
.chk{display:flex;align-items:center;gap:5px;height:16px;padding-left:1px}
.chk input{appearance:none;width:12px;height:12px;background:#fff;border:1px solid;border-color:#404040 #fff #fff #404040}
.chk input:checked::before{content:"";display:block;width:8px;height:8px;margin:1px;background:#000;clip-path:polygon(0 30%,35% 62%,100% 0,100% 35%,35% 100%,0 65%)}
.mi{width:16px;height:15px}
.combo.blue select{background:#0a246a;color:#fff;padding-left:4px;margin-right:2px}
.foot{display:flex;gap:9px;height:33px;padding:6px 8px 0 6px}
.foot span{flex:1}
.foot button,.mfoot button{width:54px;height:27px;border:1px solid;border-color:#fff #404040 #404040 #fff;box-shadow:inset -1px -1px 0 #808080}
.foot svg{width:20px;height:20px}
.msg{left:564px;top:260px;width:404px}
.msg .cap{background:linear-gradient(90deg,#808080,#c0c0c0);color:#d4d0c8;height:18px}
.msg .cap svg:first-child{width:14px;height:12px}
.msg .cap .cls svg{width:8px;height:8px}
.mbody{height:75px;display:flex;gap:8px;padding:21px 20px 0 20px;background:#fff}
.mbody svg{width:32px;height:32px}
.mbody p{line-height:12px;padding-top:3px;white-space:nowrap}
.mfoot{height:39px;display:flex;justify-content:flex-end;padding:10px 8px 0}
.mfoot button{width:75px;height:21px}

.vs{display:flex;flex-direction:column}
.hs{display:flex}
.hs{grid-column:1}
.vs button,.hs button,.thumb{background:#d4d0c8;border:1px solid;border-color:#fff #404040 #404040 #fff;box-shadow:inset -1px -1px 0 #808080}
.vs button{height:15px}
.hs button{width:16px}
.hs svg{width:4px;height:8px}
.trk{background:repeating-conic-gradient(#fff 0 25%,#d4d0c8 0 50%) 0 0/2px 2px}
.vs .a{height:17px}
.vs .thumb{flex:595}
.vs .b{flex:180}
.hs .thumb{flex:1845}
.hs .trk{flex:27}

.status{height:27px;flex:none;display:flex;gap:3px;padding:1px 0 2px;border-bottom:1px solid #fff}
.c{width:153px;display:flex;align-items:center;gap:6px;padding:0 3px;border:1px solid;border-color:#808080 #fff #fff #808080}
.c:first-child{width:155px}
.c svg{width:12px;height:12px}
.grow{flex:1}
.zoom{width:196px;display:flex;align-items:center;padding:0 3px 0 18px;border:1px solid;border-color:#808080 #fff #fff #808080}
.zoom button{width:16px;height:16px;border:1px solid #606060;border-radius:8px;background:#f4f4f4;font:bold 14px/14px "Liberation Sans",sans-serif;color:#505050}
.zoom label{width:35px}
.zoom input{appearance:none;width:84px;height:20px;margin:0 12px 0 11px;background:linear-gradient(#404040,#808080) 0 9px/100% 2px no-repeat}
.zoom input::-webkit-slider-thumb{appearance:none;width:11px;height:20px;background:#d4d0c8;border:1px solid #606060;border-radius:0 0 5px 5px}

.task{height:42px;flex:none;position:relative;display:flex;align-items:center;padding:0 3px 0 2px;border-top:1px solid #fff}
.start,.ap.up{border:1px solid;border-color:#fff #404040 #404040 #fff;box-shadow:inset -1px -1px 0 #808080}
.start{width:47px;height:38px;margin-right:9px;padding-bottom:2px;white-space:nowrap}
.ap{width:48px;height:38px;margin-right:2px}
.ap svg{width:32px;height:32px}
.ap.down{background:#fff;border:1px solid;border-color:#404040 #fff #fff #404040}
.stack{background:linear-gradient(90deg,transparent 38px,#404040 38px 39px,#fff 39px 40px,transparent 40px 42px,#404040 42px 43px,#fff 43px 44px,transparent 44px)}
.stack svg{margin-right:8px}
.lang{margin-left:auto;display:flex;align-items:center;gap:7px;padding-bottom:5px}
.lang b{font:bold 14px/16px "Noto Sans CJK TC",sans-serif;width:14px}
.hp{margin-left:5px}
.rs{width:8px;height:8px;margin:0 2px 10px 3px}
.tray{width:180px;height:38px;display:flex;align-items:center;gap:9px;padding:0 2px 0 5px;border:1px solid;border-color:#808080 #fff #fff #808080}
.tray time{flex:1;text-align:center;white-space:nowrap;margin-right:-4px;padding-bottom:2px}
.wm{position:absolute;right:18px;bottom:3px;font:bold 16px/18px "DejaVu Sans","Noto Sans CJK SC",sans-serif;color:#fff;text-shadow:1px 0 #e33,-1px 0 #e33,0 1px #e33,0 -1px #e33}
```
